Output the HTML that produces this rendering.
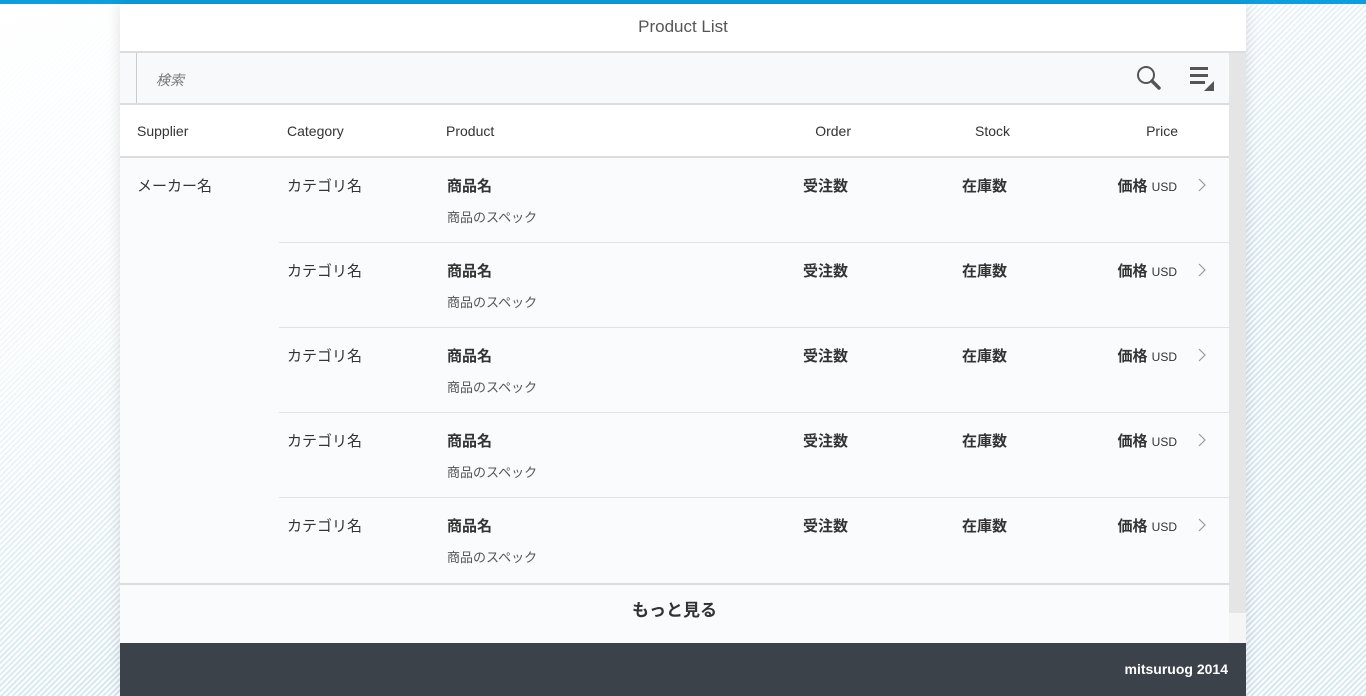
<!DOCTYPE html>
<html><head><meta charset="utf-8"><style>
*{margin:0;padding:0;box-sizing:border-box}
body{width:1366px;height:696px;overflow:hidden;position:relative;font-family:"Liberation Sans","Noto Sans CJK JP",sans-serif;color:#333;
background:repeating-linear-gradient(135deg,#d6e8f2 0 2px,#fff 2px 4px);}
.fade{position:absolute;inset:0;background:linear-gradient(160deg,rgba(255,255,255,1) 0%,rgba(255,255,255,.7) 30%,rgba(255,255,255,0) 60%);}
.topbar{position:absolute;left:0;top:0;width:1366px;height:4px;background:#0a9fe0}
.wrap{position:absolute;left:120px;top:4px;width:1126px;height:692px;background:#fafbfc;box-shadow:0 0 14px rgba(0,0,0,.12)}
.hdr{position:absolute;left:0;top:0;width:1126px;height:49px;background:#fff;border-bottom:2px solid #dcdcdc;text-align:center;font-size:17px;line-height:45px;color:#555}
.search{position:absolute;left:0;top:49px;width:1109px;height:52px;border-bottom:2px solid #dcdcdc;background:#f8f9fa}
.search .bar{position:absolute;left:16px;top:0;width:1px;height:50px;background:#ccc}
.search .ph{position:absolute;left:36px;top:17px;font-size:14px;font-style:italic;color:#777}
.scroll{position:absolute;left:1109px;top:49px;width:17px;height:560px;background:#e5e5e5}
.scroll2{position:absolute;left:1109px;top:609px;width:17px;height:30px;background:#f5f5f5}
.th{position:absolute;top:101px;left:0;width:1109px;height:53px;background:#fff;border-bottom:2px solid #dcdcdc;font-size:14px}
.th span,.row span,.row svg{position:absolute}
.row{position:absolute;left:0;width:1109px;height:85px;font-size:15px}
.row .line{position:absolute;left:159px;right:0;bottom:0;height:1px;background:#e2e2e2}
.b{font-weight:bold}
.spec{font-size:13px;color:#555}
.more{position:absolute;left:0;top:579px;width:1109px;height:60px;border-top:2px solid #dcdcdc;text-align:center;font-size:17px;font-weight:bold;line-height:52px;color:#333}
.foot{position:absolute;left:0;top:639px;width:1126px;height:53px;background:#3b4249;color:#fff;font-size:14px;font-weight:bold;text-align:right;padding-right:18px;line-height:52px}
</style></head><body>
<div class="fade"></div>
<div class="topbar"></div>
<div class="wrap">
<div class="hdr">Product List</div>
<div class="search"><div class="bar"></div><div class="ph">検索</div>
<svg style="position:absolute;left:1014px;top:10px" width="30" height="30" viewBox="0 0 30 30"><circle cx="12" cy="12" r="8" fill="none" stroke="#555" stroke-width="2"/><line x1="18" y1="18" x2="25" y2="25" stroke="#555" stroke-width="3.5" stroke-linecap="round"/></svg>
<svg style="position:absolute;left:1068px;top:12px" width="28" height="28" viewBox="0 0 28 28"><rect x="2" y="2" width="18" height="3" fill="#555"/><rect x="2" y="9" width="18" height="3" fill="#555"/><rect x="2" y="16" width="15" height="3" fill="#555"/><polygon points="26,16 26,26 16,26" fill="#555"/></svg>
</div>
<div class="scroll"></div><div class="scroll2"></div>
<div class="th">
<span style="left:17px;top:18px">Supplier</span>
<span style="left:167px;top:18px">Category</span>
<span style="left:326px;top:18px">Product</span>
<span style="right:378px;top:18px">Order</span>
<span style="right:219px;top:18px">Stock</span>
<span style="right:51px;top:18px">Price</span>
</div>
<div class="row" style="top:154px"><span style="left:17px;top:17px">メーカー名</span><span style="left:167px;top:17px">カテゴリ名</span><span class="b" style="left:327px;top:17px">商品名</span><span class="spec" style="left:327px;top:49px">商品のスペック</span><span class="b" style="right:381px;top:17px">受注数</span><span class="b" style="right:222px;top:17px">在庫数</span><span style="right:52px;top:17px"><b>価格</b> <small style="font-size:12px">USD</small></span><svg style="left:1077px;top:20px" width="10" height="14" viewBox="0 0 10 14"><polyline points="2,1 8,7 2,13" fill="none" stroke="#999" stroke-width="1.2"/></svg><div class="line"></div></div>
<div class="row" style="top:239px"><span style="left:167px;top:17px">カテゴリ名</span><span class="b" style="left:327px;top:17px">商品名</span><span class="spec" style="left:327px;top:49px">商品のスペック</span><span class="b" style="right:381px;top:17px">受注数</span><span class="b" style="right:222px;top:17px">在庫数</span><span style="right:52px;top:17px"><b>価格</b> <small style="font-size:12px">USD</small></span><svg style="left:1077px;top:20px" width="10" height="14" viewBox="0 0 10 14"><polyline points="2,1 8,7 2,13" fill="none" stroke="#999" stroke-width="1.2"/></svg><div class="line"></div></div>
<div class="row" style="top:324px"><span style="left:167px;top:17px">カテゴリ名</span><span class="b" style="left:327px;top:17px">商品名</span><span class="spec" style="left:327px;top:49px">商品のスペック</span><span class="b" style="right:381px;top:17px">受注数</span><span class="b" style="right:222px;top:17px">在庫数</span><span style="right:52px;top:17px"><b>価格</b> <small style="font-size:12px">USD</small></span><svg style="left:1077px;top:20px" width="10" height="14" viewBox="0 0 10 14"><polyline points="2,1 8,7 2,13" fill="none" stroke="#999" stroke-width="1.2"/></svg><div class="line"></div></div>
<div class="row" style="top:409px"><span style="left:167px;top:17px">カテゴリ名</span><span class="b" style="left:327px;top:17px">商品名</span><span class="spec" style="left:327px;top:49px">商品のスペック</span><span class="b" style="right:381px;top:17px">受注数</span><span class="b" style="right:222px;top:17px">在庫数</span><span style="right:52px;top:17px"><b>価格</b> <small style="font-size:12px">USD</small></span><svg style="left:1077px;top:20px" width="10" height="14" viewBox="0 0 10 14"><polyline points="2,1 8,7 2,13" fill="none" stroke="#999" stroke-width="1.2"/></svg><div class="line"></div></div>
<div class="row" style="top:494px"><span style="left:167px;top:17px">カテゴリ名</span><span class="b" style="left:327px;top:17px">商品名</span><span class="spec" style="left:327px;top:49px">商品のスペック</span><span class="b" style="right:381px;top:17px">受注数</span><span class="b" style="right:222px;top:17px">在庫数</span><span style="right:52px;top:17px"><b>価格</b> <small style="font-size:12px">USD</small></span><svg style="left:1077px;top:20px" width="10" height="14" viewBox="0 0 10 14"><polyline points="2,1 8,7 2,13" fill="none" stroke="#999" stroke-width="1.2"/></svg></div>
<div class="more">もっと見る</div>
<div class="foot">mitsuruog 2014</div>
</div>
</body></html>
